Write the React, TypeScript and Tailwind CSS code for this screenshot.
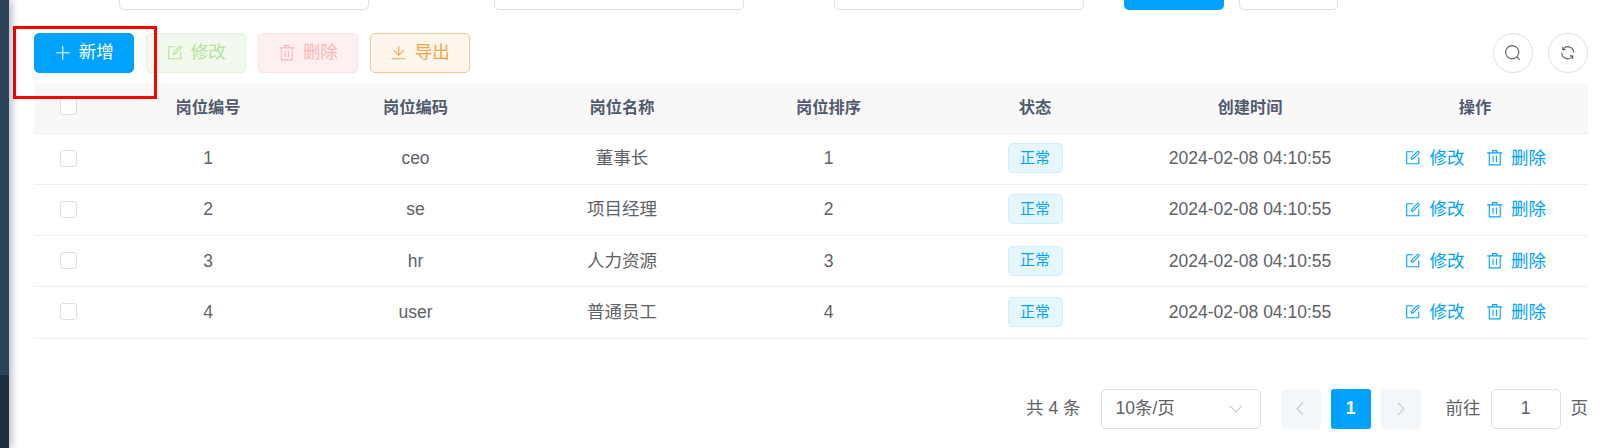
const posts = [
  { id: 1, code: "ceo", name: "董事长", sort: 1 },
  { id: 2, code: "se", name: "项目经理", sort: 2 },
  { id: 3, code: "hr", name: "人力资源", sort: 3 },
  { id: 4, code: "user", name: "普通员工", sort: 4 },
];

const headers = ["岗位编号", "岗位编码", "岗位名称", "岗位排序", "状态", "创建时间", "操作"];

const paths = {
  plus: ["M480 480V128a32 32 0 0 1 64 0v352h352a32 32 0 1 1 0 64H544v352a32 32 0 1 1-64 0V544H128a32 32 0 0 1 0-64h352z"],
  edit: [
    "M832 512a32 32 0 1 1 64 0v352a32 32 0 0 1-32 32H160a32 32 0 0 1-32-32V160a32 32 0 0 1 32-32h352a32 32 0 0 1 0 64H192v640h640V512z",
    "m469.952 554.24 52.8-7.552L847.104 222.4a32 32 0 1 0-45.248-45.248L477.44 501.44l-7.552 52.8zm422.4-422.4a96 96 0 0 1 0 135.808l-331.84 331.84a32 32 0 0 1-18.112 9.088L436.8 623.68a32 32 0 0 1-36.224-36.224l15.104-105.6a32 32 0 0 1 9.024-18.112l331.904-331.84a96 96 0 0 1 135.744 0z",
  ],
  trash: ["M160 256H96a32 32 0 0 1 0-64h256V95.936a32 32 0 0 1 32-32h256a32 32 0 0 1 32 32V192h256a32 32 0 1 1 0 64h-64v672a32 32 0 0 1-32 32H192a32 32 0 0 1-32-32V256zm448-64v-64H416v64h192zM224 896h576V256H224v640zm192-128a32 32 0 0 1-32-32V416a32 32 0 0 1 64 0v320a32 32 0 0 1-32 32zm192 0a32 32 0 0 1-32-32V416a32 32 0 0 1 64 0v320a32 32 0 0 1-32 32z"],
  download: ["M160 832h704a32 32 0 1 1 0 64H160a32 32 0 1 1 0-64zm384-253.696 236.288-236.352 45.248 45.248L508.8 704 192 387.2l45.248-45.248L480 584.704V128h64v450.304z"],
  search: ["m795.904 750.72 124.992 124.928a32 32 0 0 1-45.248 45.248L750.656 795.904a416 416 0 1 1 45.248-45.248zM480 832a352 352 0 1 0 0-704 352 352 0 0 0 0 704z"],
  refresh: ["M771.776 794.88A384 384 0 0 1 128 512h64a320 320 0 0 0 555.712 216.448H654.72a32 32 0 1 1 0-64h149.056a32 32 0 0 1 32 32v148.928a32 32 0 1 1-64 0v-50.56zM276.288 295.616h92.992a32 32 0 0 1 0 64H220.16a32 32 0 0 1-32-32V178.56a32 32 0 0 1 64 0v50.56A384 384 0 0 1 896.128 512h-64a320 320 0 0 0-555.776-216.384z"],
  left: ["M609.408 149.376 277.76 489.6a32 32 0 0 0 0 44.672l331.648 340.352a29.12 29.12 0 0 0 41.728 0 30.592 30.592 0 0 0 0-42.752L339.264 511.936l311.872-319.872a30.592 30.592 0 0 0 0-42.688 29.12 29.12 0 0 0-41.728 0z"],
  right: ["M340.864 149.312a30.592 30.592 0 0 0 0 42.752L652.736 512 340.864 831.872a30.592 30.592 0 0 0 0 42.752 29.12 29.12 0 0 0 41.728 0L714.24 534.336a32 32 0 0 0 0-44.672L382.592 149.376a29.12 29.12 0 0 0-41.728 0z"],
  down: ["M831.872 340.864 512 652.672 192.128 340.864a30.592 30.592 0 0 0-42.752 0 29.12 29.12 0 0 0 0 41.6L489.664 714.24a32 32 0 0 0 44.672 0l340.288-331.712a29.12 29.12 0 0 0 0-41.728 30.592 30.592 0 0 0-42.752 0z"],
};

function Icon({ name, className }: { name: keyof typeof paths; className?: string }) {
  return (
    <svg viewBox="0 0 1024 1024" fill="currentColor" className={className}>
      {paths[name].map((d) => (
        <path key={d} d={d} />
      ))}
    </svg>
  );
}

function Checkbox() {
  return <span className="block w-[17px] h-[17px] ml-[26px] bg-white border border-[#dcdfe6] rounded-[3px]" />;
}

function ToolButton({ icon, label, className }: { icon: keyof typeof paths; label: string; className: string }) {
  return (
    <button className={`flex items-center justify-center gap-[7px] w-[100px] h-10 rounded-[5px] border text-[17.5px] ${className}`}>
      <Icon name={icon} className="w-[17.5px] h-[17.5px]" />
      <span className="pb-[2px]">{label}</span>
    </button>
  );
}

function RowAction({ icon, label }: { icon: keyof typeof paths; label: string }) {
  return (
    <span className="flex items-center gap-[8px] text-[#00a2ff] text-[17.5px]">
      <Icon name={icon} className="w-[17.5px] h-[17.5px]" />
      {label}
    </span>
  );
}

export default function App() {
  return (
    <div
      className="relative flex w-full h-[448px] overflow-hidden bg-white text-[#606266]"
      style={{ fontFamily: '"Liberation Sans", "Noto Sans CJK SC", sans-serif' }}
    >
      {/* Sidebar edge */}
      <div className="flex flex-col w-[9px] shrink-0 z-10 shadow-[2px_0_8px_rgba(0,21,41,0.35)]">
        <div className="h-[375px] bg-[#2b4257]" />
        <div className="flex-1 bg-[#1a3040]" />
      </div>

      <div className="flex-1 pl-[25px] pr-[25px]">
        {/* Search form, cut off by the top of the window */}
        <div className="flex items-end h-[10px] overflow-hidden">
          <div className="shrink-0 ml-[85px] w-[250px] h-10 border border-[#dcdfe6] rounded-[5px]" />
          <div className="shrink-0 ml-[125px] w-[250px] h-10 border border-[#dcdfe6] rounded-[5px]" />
          <div className="shrink-0 ml-[90px] w-[250px] h-10 border border-[#dcdfe6] rounded-[5px]" />
          <div className="shrink-0 ml-[40px] w-[100px] h-10 bg-[#00a2ff] rounded-[5px]" />
          <div className="shrink-0 ml-[15px] w-[99px] h-10 border border-[#dcdfe6] rounded-[5px]" />
        </div>

        {/* Toolbar */}
        <div className="flex items-center justify-between mt-[23px] h-10">
          <div className="flex gap-3">
            <ToolButton icon="plus" label="新增" className="bg-[#00a2ff] border-[#00a2ff] text-white" />
            <ToolButton icon="edit" label="修改" className="bg-[#f0f9eb] border-[#e1f3d8] text-[#b3e19d]" />
            <ToolButton icon="trash" label="删除" className="bg-[#fef0f0] border-[#fde2e2] text-[#fab6b6]" />
            <ToolButton icon="download" label="导出" className="bg-[#fff7ed] border-[#f8c48f] text-[#f7a046]" />
          </div>
          <div className="flex gap-[15px]">
            <button className="flex items-center justify-center w-10 h-10 rounded-full border border-[#dcdfe6] text-[#606266]">
              <Icon name="search" className="w-[17.5px] h-[17.5px]" />
            </button>
            <button className="flex items-center justify-center w-10 h-10 rounded-full border border-[#dcdfe6] text-[#606266]">
              <Icon name="refresh" className="w-[17.5px] h-[17.5px]" />
            </button>
          </div>
        </div>

        {/* Table */}
        <table className="w-full table-fixed mt-[10px] border-collapse">
          <colgroup>
            <col className="w-[70px]" />
            <col className="w-[208px]" />
            <col className="w-[207px]" />
            <col className="w-[206px]" />
            <col className="w-[207px]" />
            <col className="w-[206px]" />
            <col className="w-[224px]" />
            <col />
          </colgroup>
          <thead>
            <tr className="h-[50px] bg-[#f8f8f9] border-b border-[#ebeef5]">
              <th className="font-normal pb-[2px]">
                <Checkbox />
              </th>
              {headers.map((h) => (
                <th key={h} className="text-[16.25px] font-bold text-[#515a6e] pb-[2px]">
                  {h}
                </th>
              ))}
            </tr>
          </thead>
          <tbody>
            {posts.map((p) => (
              <tr key={p.id} className="h-[51.25px] border-b border-[#ebeef5] text-[17.5px] text-center">
                <td className="pb-[1px]">
                  <Checkbox />
                </td>
                <td className="pb-[1px]">{p.id}</td>
                <td className="pb-[1px]">{p.code}</td>
                <td className="pb-[1px]">{p.name}</td>
                <td className="pb-[1px]">{p.sort}</td>
                <td className="pb-[1px]">
                  <span className="inline-flex items-center justify-center w-[55px] h-[30px] rounded-[5px] bg-[#e6f6ff] border border-[#cceeff] text-[#00a2ff] text-[15px]">
                    正常
                  </span>
                </td>
                <td className="pb-[1px]">2024-02-08 04:10:55</td>
                <td className="pb-[1px]">
                  <div className="flex justify-center gap-[21px]">
                    <RowAction icon="edit" label="修改" />
                    <RowAction icon="trash" label="删除" />
                  </div>
                </td>
              </tr>
            ))}
          </tbody>
        </table>

        {/* Pagination */}
        <div className="flex items-center justify-end mt-[50px] h-10 text-[17.5px]">
          <span className="mr-5">共 4 条</span>
          <div className="flex items-center justify-between w-[160px] h-10 pl-[14px] pr-[15px] border border-[#dcdfe6] rounded-[5px] mr-5">
            10条/页
            <Icon name="down" className="w-[17.5px] h-[17.5px] text-[#c0c4cc]" />
          </div>
          <span className="flex items-center justify-center w-10 h-10 rounded-[3px] bg-[#f4f7fa] text-[#c0c4cc]">
            <Icon name="left" className="w-[17.5px] h-[17.5px]" />
          </span>
          <span className="flex items-center justify-center w-10 h-10 mx-[10px] rounded-[3px] bg-[#00a2ff] text-white font-bold">
            1
          </span>
          <span className="flex items-center justify-center w-10 h-10 rounded-[3px] bg-[#f4f7fa] text-[#c0c4cc]">
            <Icon name="right" className="w-[17.5px] h-[17.5px]" />
          </span>
          <span className="ml-[25px] mr-[10px]">前往</span>
          <div className="flex items-center justify-center w-[70px] h-10 border border-[#dcdfe6] rounded-[5px]">
            1
          </div>
          <span className="ml-[10px]">页</span>
        </div>
      </div>

      {/* Red annotation box around the add button */}
      <div className="absolute left-[13px] top-[26px] w-[144px] h-[73px] border-[3px] border-[#ff0000] pointer-events-none" />
    </div>
  );
}
